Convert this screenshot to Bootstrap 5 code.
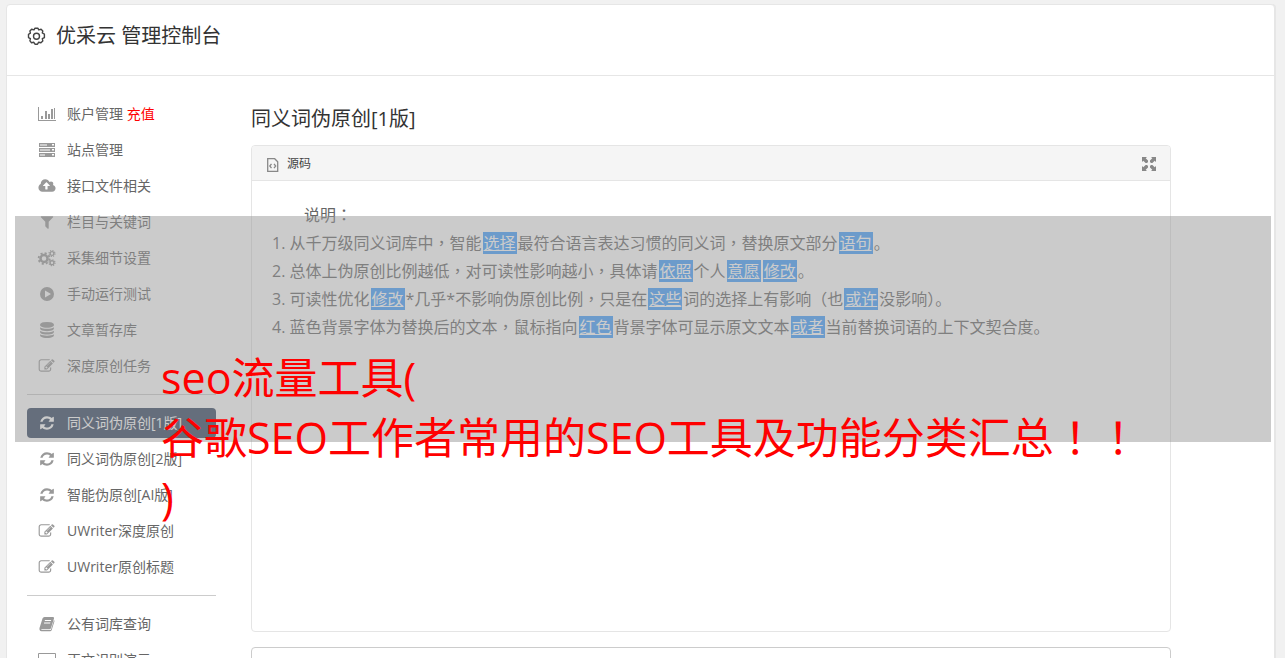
<!DOCTYPE html>
<html lang="zh-CN">
<head>
<meta charset="utf-8">
<meta name="viewport" content="width=device-width, initial-scale=1">
<title>优采云 管理控制台</title>
<link href="https://cdn.jsdelivr.net/npm/bootstrap@5.3.0/dist/css/bootstrap.min.css" rel="stylesheet">
<style>
body{background:#f1f1f1;color:#666;font:14px/20px "Open Sans","Noto Sans CJK SC",sans-serif;height:100vh;overflow:hidden}
.console{margin:4px 10px 0 6px;border:1px solid #e6e6e6;border-radius:4px;box-shadow:1px 0 #e6e6e6;min-height:100vh}
.console-head{height:71px;gap:10px;padding:0 20px 8px;border-bottom:1px solid #e6e6e6;color:#333}
.console-head h1,.main-pane h2{font-size:20px;line-height:28px;font-weight:400;margin:0;color:#333}
.console-body{padding:23px 0 0 20px;gap:35px}
.side-menu{width:189px;flex:none}
.side-menu a{display:flex;align-items:center;gap:10px;height:30px;margin-bottom:6px;padding:0 10px;border-radius:4px;color:#666;text-decoration:none;white-space:nowrap}
.side-menu a.active{background:#334560;color:#fff}
.side-menu svg{width:20px;height:16px;flex:none;fill:#999;overflow:visible}
.side-menu .active svg{fill:#fff}
.side-menu .recharge{color:red}
.side-menu hr{margin:13px 0;border-color:#ccc;opacity:1}
.main-pane{flex:1;min-width:0;margin-right:103px;padding-top:6px}
.source-panel{margin-top:12px;height:487px;border:1px solid #e5e5e5;border-radius:4px}
.source-head{height:35px;padding:2px 14px 0;background:#f5f5f5;border-bottom:1px solid #e5e5e5;font-size:12px;color:#444;border-radius:3px 3px 0 0}
.source-head button{border:0;background:none;padding:0;line-height:0}
.source-text{padding:20px;font-size:16px;line-height:28px}
.source-text p{margin:0;height:28px}
.source-text a{background:#409eff;color:#fff;padding:0 1px;margin:0 1px;line-height:20px}
.mid{font-family:"Noto Sans CJK TC",sans-serif;line-height:1}
.result-box{margin-top:15px;height:120px;border:1px solid #ccc;border-radius:4px;resize:none}
.banner{top:216px;left:15px;right:14px;height:226px;padding:132px 0 0 146px;background:rgba(151,151,151,.5);color:red;font-size:43px;line-height:60px;white-space:nowrap;pointer-events:none}
</style>
</head>
<body class="position-relative">
<svg class="d-none">
<symbol id="refresh" viewBox="0 0 1792 1792"><path d="M1639 1056q0 5-1 7-64 268-268 434.500t-478 166.500q-146 0-282.500-55t-243.500-157l-129 129q-19 19-45 19t-45-19-19-45v-448q0-26 19-45t45-19h448q26 0 45 19t19 45-19 45l-137 137q71 66 161 102t187 36q134 0 250-65t186-179q11-17 53-117 8-23 30-23h192q13 0 22.500 9.500t9.500 22.500zm25-800v448q0 26-19 45t-45 19h-448q-26 0-45-19t-19-45 19-45l138-138q-148-137-349-137-134 0-250 65t-186 179q-11 17-53 117-8 23-30 23h-199q-13 0-22.500-9.500t-9.500-22.500v-7q65-268 270-434.500t480-166.500q146 0 284 55.500t245 156.500l130-129q19-19 45-19t45 19 19 45z"/></symbol>
<symbol id="edit" viewBox="40 0 1792 1792"><path d="M888 1184l116-116-152-152-116 116v56h96v96h56zm440-720q-16-16-33 1l-350 350q-17 17-1 33t33-1l350-350q17-17 1-33zm80 594v190q0 119-84.500 203.500t-203.500 84.500h-832q-119 0-203.500-84.500t-84.500-203.500v-832q0-119 84.500-203.500t203.500-84.500h832q63 0 117 25 15 7 18 23 3 17-9 29l-49 49q-14 14-32 8-23-6-45-6h-832q-66 0-113 47t-47 113v832q0 66 47 113t113 47h832q66 0 113-47t47-113v-126q0-13 9-22l64-64q15-15 35-7t20 29zm-96-738l288 288-672 672h-288v-288zm444 132l-92 92-288-288 92-92q28-28 68-28t68 28l152 152q28 28 28 68t-28 68z"/></symbol>
</svg>
<div class="console bg-white">
  <header class="console-head d-flex align-items-center">
    <svg width="19" height="19" viewBox="0 0 19 19" fill="none" stroke="#444" stroke-width="1.400"><path d="M8 1.200h3l.7 1.700 2.400-.6 1.700 1.700-.5 2 2.100 1.200v3.500l-2.100 1 .5 2.200-1.900 1.800-2.200-.5-1.200 2H8l-1.200-1.900-2.300.4-1.600-1.800.5-2.200-1.900-1.100V7.300l1.900-1.100-.5-2.200 1.700-1.700 2.400.6z" stroke-linejoin="round"/><circle cx="9.500" cy="9.200" r="3"/></svg>
    <h1>优采云 管理控制台</h1>
  </header>
  <div class="console-body d-flex">
    <nav class="side-menu" aria-label="管理菜单">
      <a href="#"><svg viewBox="0 0 20 16"><path d="M1 1h1v13h17v1H1zM4 10h2v3H4zM8 5h2v8H8zM11 8h2v5h-2zM14 3h2v10h-2zM17 2h1v11h-1z"/></svg><span>账户管理 <span class="recharge">充值</span></span></a>
      <a href="#"><svg viewBox="0 0 20 16"><path fill-rule="evenodd" d="M2 1h16v4H2zM3 2.500v1h7v-1zM15 2v1.500h2V2zM2 6h16v4H2zM3 7.500v1h10v-1zM15 7v1.500h2V7zM2 11h16v4H2zM3 12.500v1h5v-1zM15 12v1.500h2V12z"/></svg><span>站点管理</span></a>
      <a href="#"><svg viewBox="-64 0 1920 1792"><path d="M1216 864q0-14-9-23l-352-352q-9-9-23-9t-23 9l-351 351q-10 12-10 24 0 14 9 23t23 9h224v352q0 13 9.500 22.500t22.500 9.500h192q13 0 22.500-9.500t9.500-22.500v-352h224q13 0 22.500-9.500t9.500-22.500zm640 288q0 159-112.500 271.500t-271.500 112.500h-1088q-185 0-316.500-131.500t-131.500-316.500q0-130 70-240t188-165q-2-30-2-43 0-212 150-362t362-150q156 0 285.500 87t188.500 231q71-62 166-62 106 0 181 75t75 181q0 76-41 138 130 31 213.500 135.500t83.500 238.500z"/></svg><span>接口文件相关</span></a>
      <a href="#"><svg viewBox="0 0 1792 1792"><path d="M1595 295q17 41-14 70l-493 493v742q0 42-39 59-13 5-25 5-27 0-45-19l-256-256q-19-19-19-45v-486l-493-493q-31-29-14-70 17-39 59-39h1280q42 0 59 39z"/></svg><span>栏目与关键词</span></a>
      <a href="#"><svg viewBox="0 0 20 16"><g fill="none" stroke="#999"><circle cx="7" cy="8.500" r="3.500" stroke-width="2.500"/><circle cx="7" cy="8.500" r="5.400" stroke-width="1.800" stroke-dasharray="2.120"/><circle cx="15" cy="3.500" r="1.900" stroke-width="1.400"/><circle cx="15" cy="3.500" r="3" stroke-width="1.200" stroke-dasharray="1.180"/><circle cx="15" cy="12.700" r="1.900" stroke-width="1.400"/><circle cx="15" cy="12.700" r="3" stroke-width="1.200" stroke-dasharray="1.180"/></g></svg><span>采集细节设置</span></a>
      <a href="#"><svg viewBox="0 0 20 16"><path fill-rule="evenodd" d="M10 1a7 7 0 1 0 0 14 7 7 0 0 0 0-14zM8 4.500l6 3.500-6 3.500z"/></svg><span>手动运行测试</span></a>
      <a href="#"><svg viewBox="0 0 1792 1792"><path d="M896 768q237 0 443-43t325-127v170q0 69-103 128t-280 93.500-385 34.500-385-34.500-280-93.500-103-128v-170q119 84 325 127t443 43zm0 768q237 0 443-43t325-127v170q0 69-103 128t-280 93.500-385 34.500-385-34.500-280-93.500-103-128v-170q119 84 325 127t443 43zm0-384q237 0 443-43t325-127v170q0 69-103 128t-280 93.500-385 34.500-385-34.500-280-93.500-103-128v-170q119 84 325 127t443 43zm0-1152q208 0 385 34.500t280 93.500 103 128v128q0 69-103 128t-280 93.500-385 34.500-385-34.500-280-93.500-103-128v-128q0-69 103-128t280-93.500 385-34.500z"/></svg><span>文章暂存库</span></a>
      <a href="#"><svg><use href="#edit"/></svg><span>深度原创任务</span></a>
      <hr>
      <a href="#" class="active" aria-current="page"><svg><use href="#refresh"/></svg><span>同义词伪原创[1版]</span></a>
      <a href="#"><svg><use href="#refresh"/></svg><span>同义词伪原创[2版]</span></a>
      <a href="#"><svg><use href="#refresh"/></svg><span>智能伪原创[AI版]</span></a>
      <a href="#"><svg><use href="#edit"/></svg><span>UWriter深度原创</span></a>
      <a href="#"><svg><use href="#edit"/></svg><span>UWriter原创标题</span></a>
      <hr>
      <a href="#"><svg viewBox="0 0 20 16"><path fill-rule="evenodd" d="M7.500 1H16q1.500 0 1 1.500L14 12q-.4 1.200-1.500 1.200H5q-1 0-.8.900h8.600q1 0 1.400-1.200L17 4q.7.500.4 1.500L14.700 14q-.4 1.200-1.700 1.200H4.500Q2 15 2.500 12L5.500 2.500Q6 1 7.500 1zM8 4l-.3 1h6.200l.3-1zM7.200 6.500l-.3 1h6.200l.3-1z"/></svg><span>公有词库查询</span></a>
      <a href="#"><svg viewBox="0 0 20 16"><path fill-rule="evenodd" d="M2 1h16q1 0 1 1v10q0 1-1 1h-6v2H8v-2H2q-1 0-1-1V2q0-1 1-1zM2 2v8h16V2z"/></svg><span>正文识别演示</span></a>
    </nav>
    <main class="main-pane">
      <h2>同义词伪原创[1版]</h2>
      <section class="source-panel">
        <div class="source-head d-flex align-items-center justify-content-between">
          <span class="d-flex align-items-center gap-2"><svg width="13" height="15" viewBox="0 0 13 15" fill="none" stroke="#888" stroke-width="1.300"><path d="M1.700 1.700h7l3 3v9.600h-10zM5.500 6.800L3.800 9l1.700 2.200M8 6.800L9.700 9 8 11.200"/></svg>源码</span>
          <button type="button" aria-label="全屏"><svg width="14" height="14" viewBox="0 0 14 14" fill="#888"><path id="corner" d="M0 0h5L3.700 1.300 6 3.600 6 5 5 6 3.600 6 1.300 3.700 0 5z"/><use href="#corner" transform="rotate(90 7 7)"/><use href="#corner" transform="rotate(180 7 7)"/><use href="#corner" transform="rotate(270 7 7)"/></svg></button>
        </div>
        <div class="source-text">
          <p class="ps-4 ms-2">说明<span class="mid" lang="zh-TW">：</span></p>
          <p>1. 从千万级同义词库中<span class="mid" lang="zh-TW">，</span>智能<a href="#">选择</a>最符合语言表达习惯的同义词<span class="mid" lang="zh-TW">，</span>替换原文部分<a href="#">语句</a>。</p>
          <p>2. 总体上伪原创比例越低<span class="mid" lang="zh-TW">，</span>对可读性影响越小<span class="mid" lang="zh-TW">，</span>具体请<a href="#">依照</a>个人<a href="#">意愿</a><a href="#">修改</a>。</p>
          <p>3. 可读性优化<a href="#">修改</a>*几乎*不影响伪原创比例<span class="mid" lang="zh-TW">，</span>只是在<a href="#">这些</a>词的选择上有影响<span class="mid" lang="zh-TW">（</span>也<a href="#">或许</a>没影响<span class="mid" lang="zh-TW">）</span>。</p>
          <p>4. 蓝色背景字体为替换后的文本<span class="mid" lang="zh-TW">，</span>鼠标指向<a href="#">红色</a>背景字体可显示原文文本<a href="#">或者</a>当前替换词语的上下文契合度。</p>
        </div>
      </section>
      <textarea class="result-box d-block w-100" aria-label="原文"></textarea>
    </main>
  </div>
</div>
<div class="banner position-absolute">seo流量工具(<br>谷歌SEO工作者常用的SEO工具及功能分类汇总<span class="mid" lang="zh-TW">！！</span><br>)</div>
<script src="https://cdn.jsdelivr.net/npm/bootstrap@5.3.0/dist/js/bootstrap.bundle.min.js"></script>
</body>
</html>
